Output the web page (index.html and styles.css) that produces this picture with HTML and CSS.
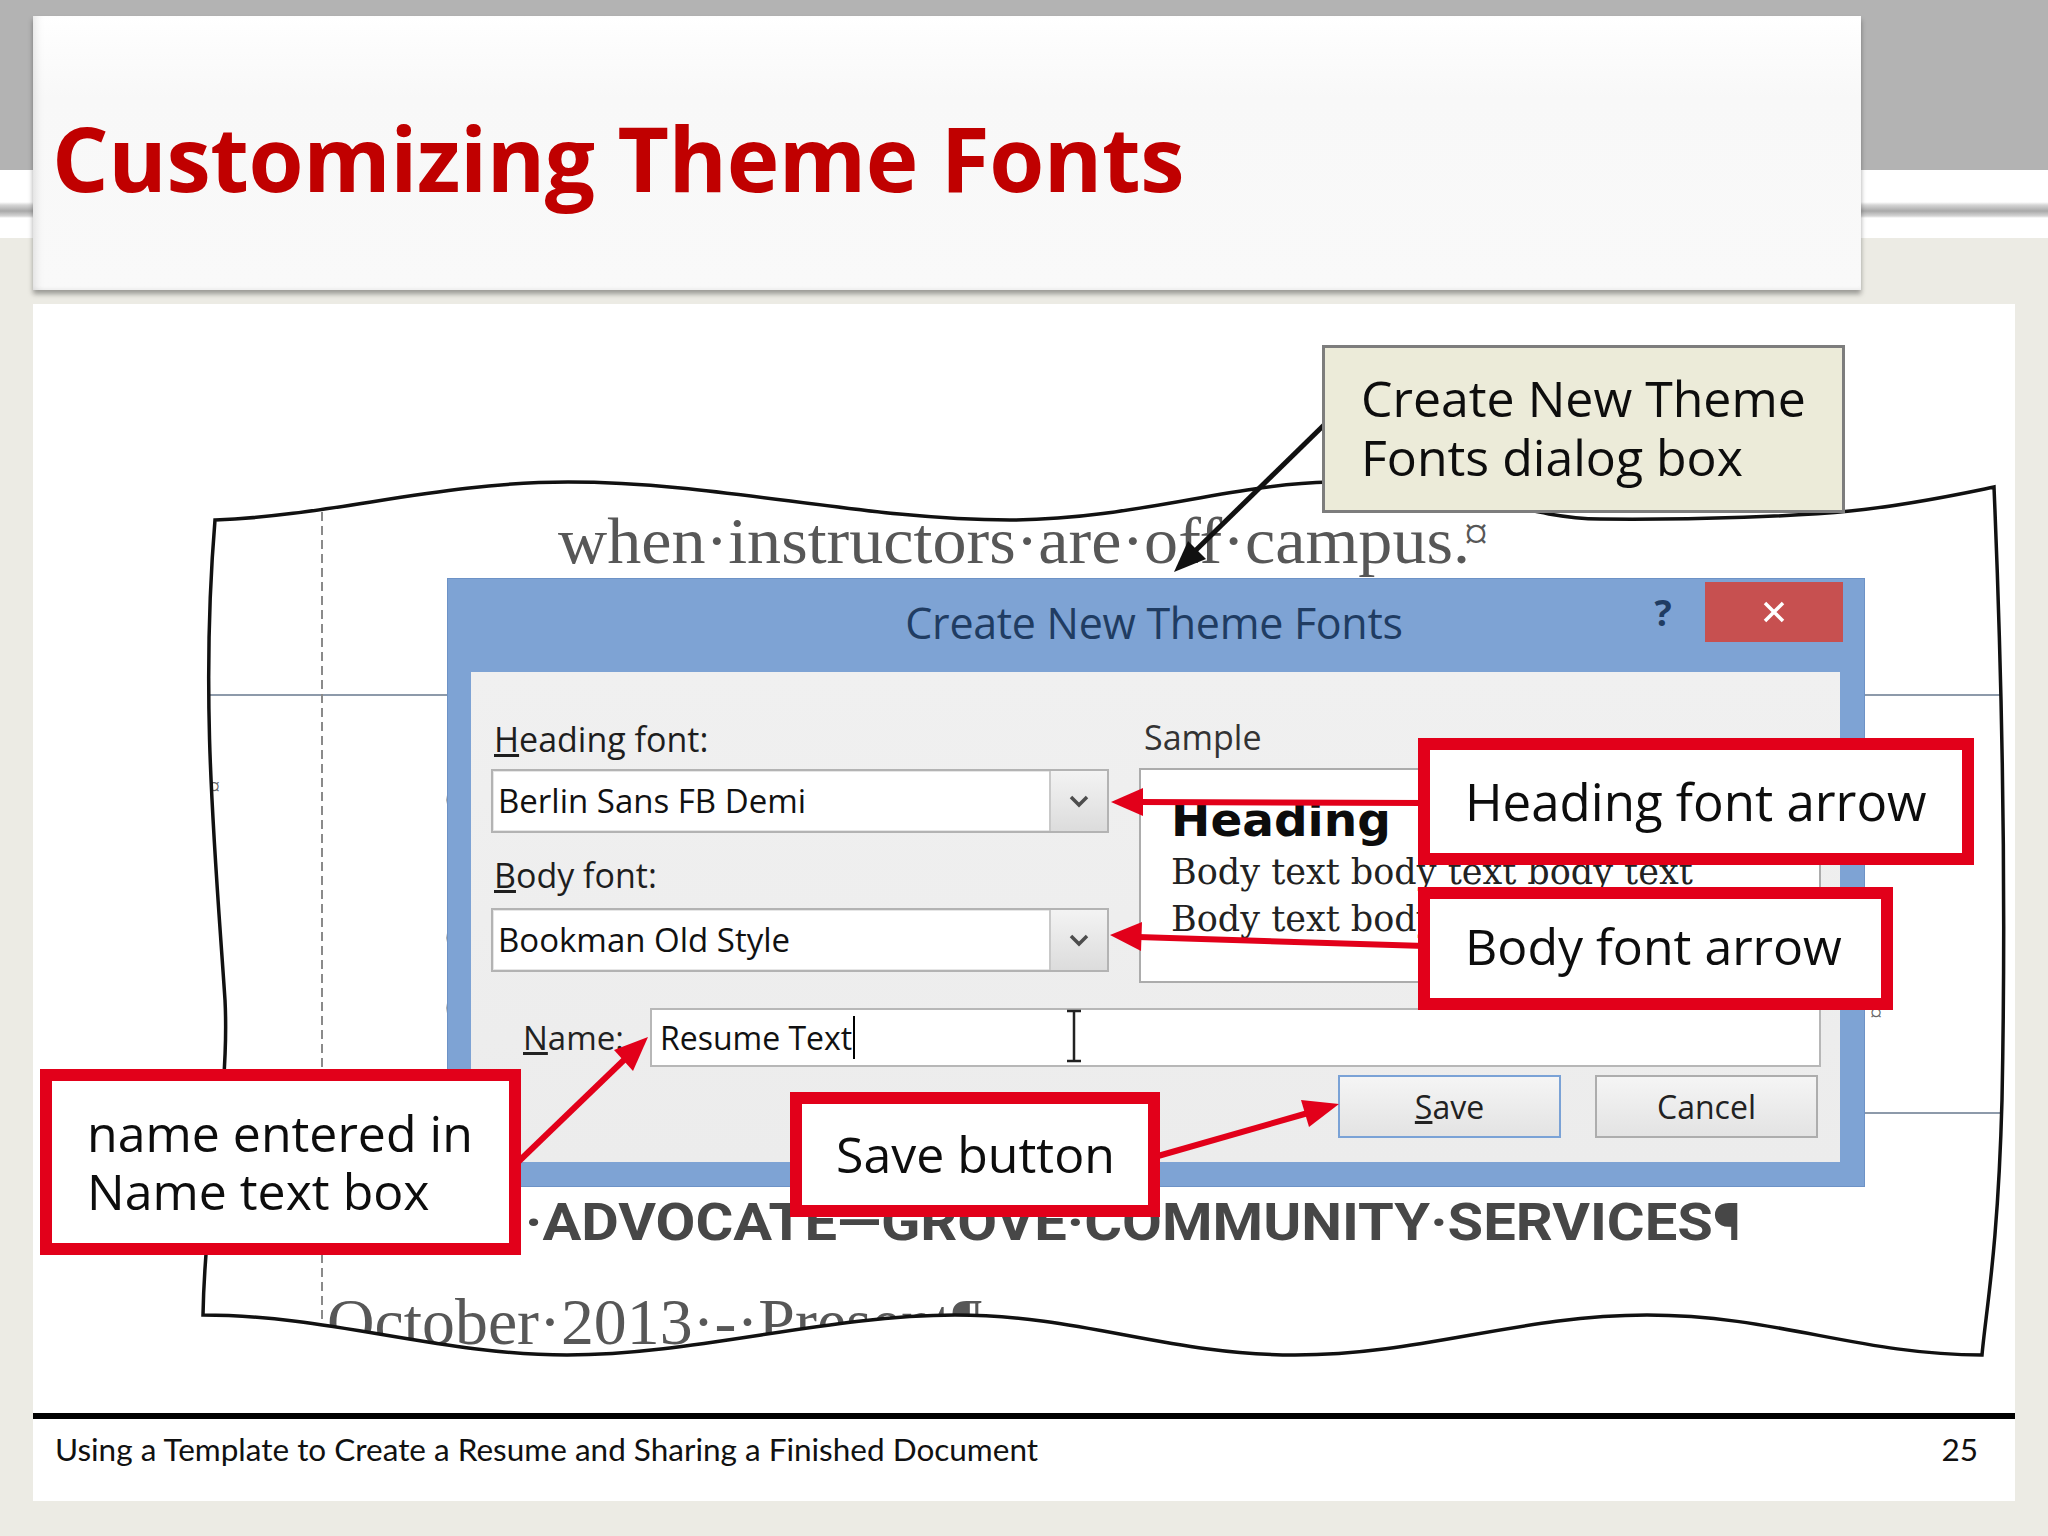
FILE: index.html
```html
<!DOCTYPE html>
<html>
<head>
<meta charset="utf-8">
<link rel="stylesheet" href="styles.css">
</head>
<body>
<div class="header">
  <div class="title-box"><h1>Customizing Theme Fonts</h1></div>
</div>
<div class="panel">
  <div class="figure">
    <svg class="layer" viewBox="33 304 1982 1109" width="1982" height="1109">
      <defs>
        <clipPath id="paper">
          <path d="M215,520 C330,516 440,482 568,482 C720,482 860,520 1010,520 C1130,520 1230,484 1330,482 C1450,480 1520,518 1600,519 C1700,520 1800,516 1850,511 C1910,505 1960,494 1994,487 C2003,700 2006,900 2002,1100 C1998,1250 1986,1310 1982,1355 C1860,1355 1775,1315 1647,1315 C1520,1315 1422,1355 1295,1355 C1168,1355 1082,1315 955,1315 C828,1315 694,1355 567,1355 C440,1355 330,1315 203,1315 C205,1200 230,1100 225,1000 C215,850 200,700 215,520 Z"/>
        </clipPath>
      </defs>
      <g clip-path="url(#paper)">
        <line x1="150" y1="695" x2="2050" y2="695" class="doc-rule"/>
        <line x1="150" y1="1113" x2="2050" y2="1113" class="doc-rule"/>
        <line x1="322" y1="470" x2="322" y2="1420" class="doc-dash"/>
        <text x="558" y="563" class="doc-serif" textLength="912" lengthAdjust="spacingAndGlyphs">when·instructors·are·off·campus.</text>
        <text x="1464" y="550" class="doc-mark">¤</text>
        <text x="208" y="794" class="doc-small">¤</text>
        <text x="1870" y="1020" class="doc-small">¤</text>
        <text x="525" y="1240" class="doc-bold" textLength="1216" lengthAdjust="spacingAndGlyphs">·ADVOCATE—GROVE·COMMUNITY·SERVICES¶</text>
        <text x="327" y="1344" class="doc-serif" textLength="655" lengthAdjust="spacingAndGlyphs">October·2013·-·Present¶</text>
        <path d="M451,788 q-6,12 0,24 M451,926 q-6,12 0,24 M451,996 q-6,12 0,24" class="doc-arc"/>
      </g>
      <path class="frame" d="M215,520 C330,516 440,482 568,482 C720,482 860,520 1010,520 C1130,520 1230,484 1330,482 C1450,480 1520,518 1600,519 C1700,520 1800,516 1850,511 C1910,505 1960,494 1994,487 C2003,700 2006,900 2002,1100 C1998,1250 1986,1310 1982,1355 C1860,1355 1775,1315 1647,1315 C1520,1315 1422,1355 1295,1355 C1168,1355 1082,1315 955,1315 C828,1315 694,1355 567,1355 C440,1355 330,1315 203,1315 C205,1200 230,1100 225,1000 C215,850 200,700 215,520 Z"/>
    </svg>

    <div class="dialog">
      <div class="dlg-bar">
        <div class="dlg-title">Create New Theme Fonts</div>
        <div class="dlg-help">?</div>
        <div class="dlg-close">
          <svg width="24" height="24" viewBox="0 0 24 24"><path d="M3,3 L21,21 M21,3 L3,21" class="x-stroke"/></svg>
        </div>
      </div>
      <div class="dlg-client">
        <div class="dlg-top">
          <div class="col-left">
            <div class="lbl"><u>H</u>eading font:</div>
            <div class="combo">
              <span class="combo-text">Berlin Sans FB Demi</span>
              <span class="combo-btn"><svg width="22" height="14" viewBox="0 0 22 14"><path d="M3,3 L11,11 L19,3" class="chev"/></svg></span>
            </div>
            <div class="lbl lbl-body"><u>B</u>ody font:</div>
            <div class="combo">
              <span class="combo-text">Bookman Old Style</span>
              <span class="combo-btn"><svg width="22" height="14" viewBox="0 0 22 14"><path d="M3,3 L11,11 L19,3" class="chev"/></svg></span>
            </div>
          </div>
          <div class="col-right">
            <div class="lbl lbl-sample">Sample</div>
            <div class="sample">
              <div class="s-head">Heading</div>
              <div class="s-body s-first">Body text body text body text</div>
              <div class="s-body">Body text body text.</div>
            </div>
          </div>
        </div>
        <div class="name-row">
          <span class="name-lbl"><u>N</u>ame:</span>
          <div class="name-input"><span class="caret">Resume Text</span></div>
        </div>
        <div class="btn-row">
          <div class="btn btn-save"><u>S</u>ave</div>
          <div class="btn btn-cancel">Cancel</div>
        </div>
      </div>
    </div>

    <svg class="layer" viewBox="33 304 1982 1109" width="1982" height="1109">
      <g class="red">
        <line x1="1425" y1="803" x2="1138" y2="802"/>
        <polygon points="1111,802 1143,788 1143,816"/>
        <line x1="1425" y1="946" x2="1138" y2="937"/>
        <polygon points="1110,935 1142,922 1141,951"/>
        <line x1="515" y1="1165" x2="626" y2="1058"/>
        <polygon points="648,1037 633,1071 614,1050"/>
        <line x1="1158" y1="1156" x2="1308" y2="1113"/>
        <polygon points="1339,1104 1309,1127 1301,1100"/>
      </g>
      <g class="blk">
        <line x1="1324" y1="425" x2="1194" y2="552"/>
        <polygon points="1174,572 1206,559 1188,541"/>
      </g>
      <path d="M1067,1011 h14 M1074,1011 v50 M1067,1061 h14" class="ibeam"/>
    </svg>

    <div class="callout callout-dialog">Create New Theme<br>Fonts dialog box</div>
    <div class="callout callout-red callout-heading">Heading font arrow</div>
    <div class="callout callout-red callout-body">Body font arrow</div>
    <div class="callout callout-red callout-name">name entered in<br>Name text box</div>
    <div class="callout callout-red callout-save">Save button</div>
  </div>
  <div class="footer">
    <span>Using a Template to Create a Resume and Sharing a Finished Document</span>
    <span>25</span>
  </div>
</div>
</body>
</html>
```

FILE: styles.css
```css
html, body {
  margin: 0;
  padding: 0;
}
body {
  width: 2048px;
  height: 1536px;
  overflow: hidden;
  background: #ecebe4;
  font-family: "Open Sans", "Noto Sans", sans-serif;
}

/* ---------- header ---------- */
.header {
  height: 304px;
  box-sizing: border-box;
  padding: 16px 0 0 33px;
  background: linear-gradient(to bottom,
    #b3b3b3 0, #b3b3b3 170px,
    #ffffff 170px, #ffffff 202px,
    #d6d6d6 205px, #a9a9a9 211px, #d4d4d4 216px,
    #ffffff 218px, #ffffff 238px,
    #ecebe4 238px, #ecebe4 304px);
}
.title-box {
  width: 1828px;
  height: 274px;
  box-sizing: border-box;
  padding: 92px 0 0 19px;
  background: linear-gradient(to bottom, #ffffff 0, #f8f8f8 30%, #f9f9f9 100%);
  box-shadow: 0 4px 5px rgba(0, 0, 0, 0.35), inset 9px 0 9px -6px rgba(0, 0, 0, 0.10), inset 0 -3px 4px -2px rgba(0,0,0,0.06);
}
h1 {
  margin: 0;
  font-family: "Open Sans", sans-serif;
  font-weight: 700;
  font-size: 89px;
  line-height: 100px;
  color: #c00000;
  letter-spacing: -0.4px;
}

/* ---------- panel ---------- */
.panel {
  margin-left: 33px;
  width: 1982px;
  height: 1197px;
  background: #ffffff;
  display: flex;
  flex-direction: column;
}
.figure {
  position: relative;
  height: 1109px;
  overflow: hidden;
}
.footer {
  border-top: 6px solid #000;
  box-sizing: border-box;
  height: 88px;
  display: flex;
  justify-content: space-between;
  padding: 10px 37px 0 22px;
  font-family: Lato, "Open Sans", sans-serif;
  font-size: 31.5px;
  line-height: 40px;
  color: #111;
}

/* ---------- figure layers ---------- */
.layer {
  position: absolute;
  left: 0;
  top: 0;
  overflow: visible;
}
.doc-rule { stroke: #8d9aaa; stroke-width: 2; }
.doc-dash { stroke: #8a8a8a; stroke-width: 2; stroke-dasharray: 9 5; }
.doc-serif {
  font-family: "Liberation Serif", "Times New Roman", serif;
  font-size: 66px;
  fill: #575757;
}
.doc-mark {
  font-family: "Liberation Serif", serif;
  font-size: 48px;
  fill: #575757;
}
.doc-small {
  font-family: "Liberation Serif", serif;
  font-size: 24px;
  fill: #666;
}
.doc-bold {
  font-family: Roboto, "Liberation Sans", sans-serif;
  font-weight: 700;
  font-size: 52px;
  fill: #474747;
}
.doc-arc { stroke: #555; stroke-width: 3; fill: none; }
.frame { fill: none; stroke: #111; stroke-width: 3.5; }

.red line { stroke: #e2001a; stroke-width: 6; }
.red polygon { fill: #e2001a; }
.blk line { stroke: #111; stroke-width: 5; }
.blk polygon { fill: #111; }
.ibeam { stroke: #222; stroke-width: 2.5; fill: none; }

/* ---------- dialog ---------- */
.dialog {
  position: absolute;
  left: 414px;
  top: 274px;
  width: 1418px;
  height: 609px;
  box-sizing: border-box;
  padding: 0 24px 24px 23px;
  background: #7ea3d4;
  border: 1px solid #6d92c6;
  display: flex;
  flex-direction: column;
}
.dlg-bar {
  height: 93px;
  display: flex;
  align-items: flex-start;
  flex-shrink: 0;
}
.dlg-title {
  flex: 1;
  padding: 15px 0 0 186px;
  text-align: center;
  font-size: 43px;
  line-height: 58px;
  color: #203c62;
  letter-spacing: -0.3px;
}
.dlg-help {
  width: 24px;
  padding-top: 10px;
  font-size: 36px;
  line-height: 48px;
  font-weight: 700;
  color: #203c62;
  text-align: center;
}
.dlg-close {
  margin: 3px -3px 0 30px;
  width: 138px;
  height: 60px;
  background: #c75050;
  display: flex;
  align-items: center;
  justify-content: center;
}
.x-stroke { stroke: #fff; stroke-width: 3.5; fill: none; }

.dlg-client {
  flex: 1;
  background: linear-gradient(to bottom, #f0f0f0, #ececec);
  padding: 0 19px 0 20px;
  font-size: 34px;
  color: #1e1e1e;
}
.dlg-top {
  display: flex;
  gap: 30px;
}
.col-left {
  width: 619px;
  padding-top: 44px;
}
.col-right {
  width: 683px;
  padding-top: 42px;
}
.lbl {
  height: 47px;
  line-height: 47px;
  padding-left: 3px;
  margin-bottom: 6px;
}
.lbl-body {
  margin-top: 19px;
  margin-bottom: 9px;
}
.lbl-sample {
  margin-bottom: 7px;
  padding-left: 5px;
  color: #333;
}
.combo {
  height: 64px;
  box-sizing: border-box;
  border: 2px solid #b3b3b3;
  background: #fff;
  display: flex;
  box-shadow: inset 0 0 0 1px #e6e6e6;
  font-size: 33px;
}
.combo-text {
  flex: 1;
  padding-left: 5px;
  line-height: 60px;
  color: #111;
}
.combo-btn {
  width: 56px;
  border-left: 2px solid #c9c9c9;
  background: linear-gradient(to bottom, #f3f3f3, #dcdcdc);
  display: flex;
  align-items: center;
  justify-content: center;
}
.chev { stroke: #4d4d4d; stroke-width: 3.5; fill: none; }

.sample {
  height: 215px;
  box-sizing: border-box;
  border: 2px solid #acacac;
  background: #fff;
  padding: 23px 0 0 30px;
  overflow: hidden;
}
.s-head {
  font-family: "DejaVu Sans", sans-serif;
  font-weight: 700;
  font-size: 47px;
  line-height: 54px;
  color: #0c0c0c;
}
.s-body {
  font-family: "DejaVu Serif", serif;
  font-size: 35px;
  line-height: 47px;
  color: #222;
  white-space: nowrap;
}
.s-first { margin-top: 2px; }

.name-row {
  margin-top: 25px;
  display: flex;
  padding-left: 32px;
}
.name-lbl {
  width: 127px;
  line-height: 59px;
  color: #222;
  font-size: 33px;
}
.name-input {
  width: 1172px;
  height: 59px;
  box-sizing: border-box;
  border: 2px solid #b7b7b7;
  background: #fff;
  padding-left: 8px;
  line-height: 55px;
  font-size: 32px;
  color: #111;
}
.caret {
  border-right: 2px solid #000;
  padding-right: 1px;
}
.btn-row {
  margin-top: 8px;
  display: flex;
  justify-content: flex-end;
  gap: 34px;
  padding-right: 3px;
}
.btn {
  width: 223px;
  height: 63px;
  box-sizing: border-box;
  border: 2px solid #adadad;
  background: linear-gradient(to bottom, #f5f5f5, #e3e3e3);
  display: flex;
  align-items: center;
  justify-content: center;
  font-size: 32px;
  color: #222;
}
.btn-save { border-color: #7aa2d6; }

/* ---------- callouts ---------- */
.callout {
  position: absolute;
  box-sizing: border-box;
  font-family: "Open Sans", sans-serif;
  font-size: 50px;
  color: #0d0d0d;
  white-space: nowrap;
}
.callout-dialog {
  left: 1289px;
  top: 41px;
  width: 523px;
  height: 168px;
  background: #ecebd9;
  border: 3px solid #7d7d7d;
  padding: 21px 0 0 36px;
  line-height: 59px;
}
.callout-red {
  background: #fff;
  border: 12px solid #e2001a;
  line-height: 60px;
  padding-left: 35px;
}
.callout-heading {
  left: 1385px;
  top: 434px;
  width: 556px;
  height: 127px;
  padding-top: 21px;
  font-size: 51px;
}
.callout-body {
  left: 1385px;
  top: 583px;
  width: 475px;
  height: 123px;
  padding-top: 17px;
}
.callout-name {
  left: 7px;
  top: 765px;
  width: 481px;
  height: 186px;
  line-height: 58px;
  padding-top: 23px;
}
.callout-save {
  left: 757px;
  top: 788px;
  width: 370px;
  height: 125px;
  padding-top: 20px;
  padding-left: 34px;
}
```
